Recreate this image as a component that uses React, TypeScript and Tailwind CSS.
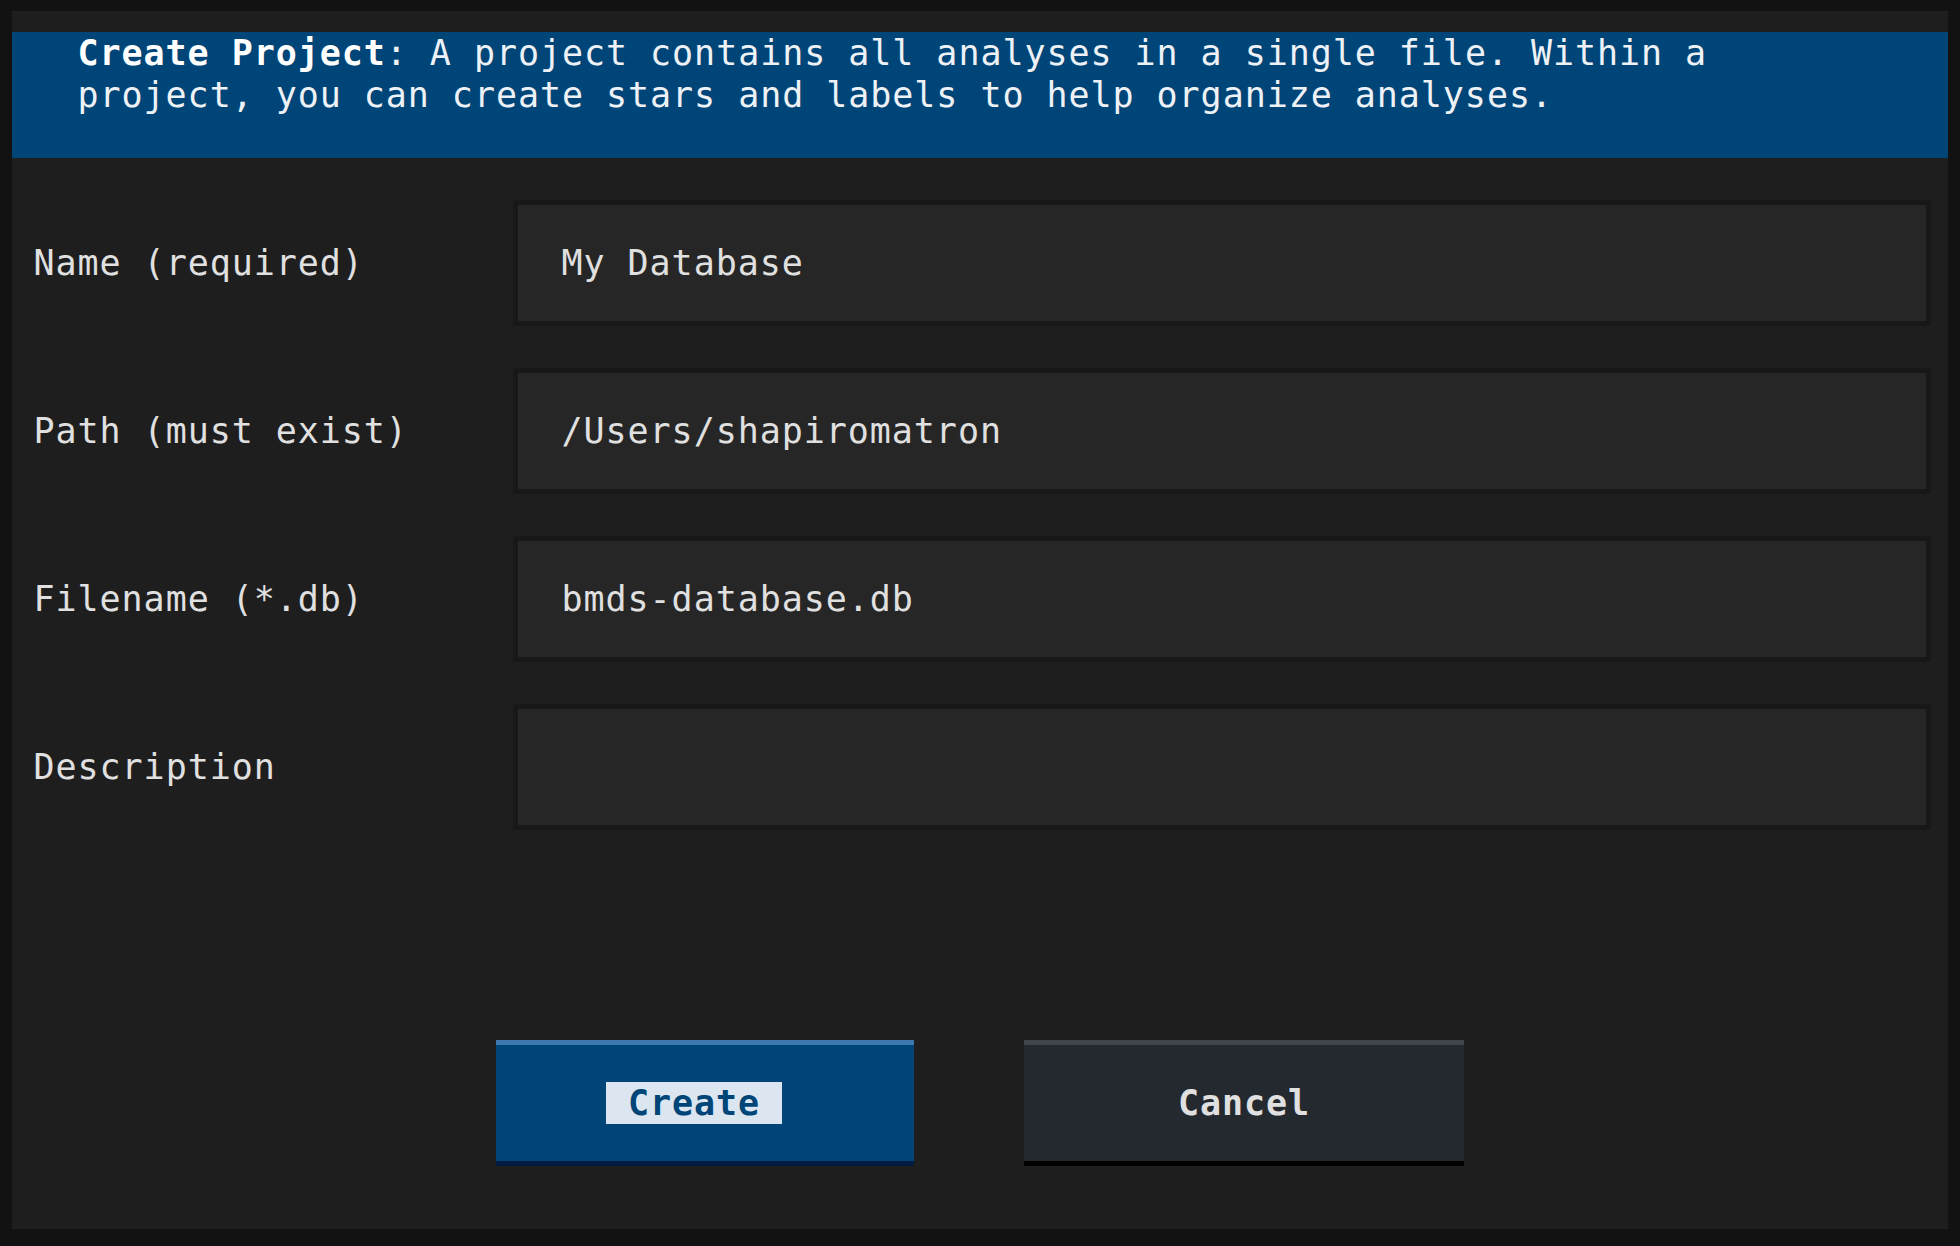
import React from "react";

const mono = { fontFamily: '"DejaVu Sans Mono", "Liberation Mono", monospace' };

function Field({ label, value }: { label: string; value: string }) {
  return (
    <div className="flex items-center">
      <div className="w-[501px] shrink-0 pl-[21.5px] text-[#e0e0e0] leading-[42px] whitespace-pre">
        {label}
      </div>
      <div className="w-[1418px] h-[126px] shrink-0 border-[5px] border-[#181818] bg-[#262626] flex items-center pl-[43.5px] text-[#e0e0e0] leading-[42px] whitespace-pre">
        {value}
      </div>
    </div>
  );
}

export default function App() {
  return (
    <div
      className="w-[1960px] h-[1246px] bg-[#121212] pt-[11px] pl-[12px] overflow-hidden text-[35px] tracking-[0.95px]"
      style={mono}
    >
      <div className="w-[1936px] h-[1218px] bg-[#1e1e1e] flex flex-col">
        <div className="mt-[21px] h-[126px] bg-[#004578] pl-[65.5px] text-[#eef2f6] leading-[42px] whitespace-pre">
          <div>
            <span className="font-bold text-white">Create Project</span>: A project contains all analyses in a single file. Within a
          </div>
          <div>project, you can create stars and labels to help organize analyses.</div>
        </div>
        <div className="mt-[42px] flex flex-col gap-[42px]">
          <Field label="Name (required)" value="My Database" />
          <Field label="Path (must exist)" value="/Users/shapiromatron" />
          <Field label="Filename (*.db)" value="bmds-database.db" />
          <Field label="Description" value="" />
        </div>
        <div className="mt-[210px] flex pl-[484px] gap-[110px]">
          <div className="w-[418px] h-[126px] bg-[#004578] border-t-[5px] border-b-[5px] border-t-[#3f77b0] border-b-[#001a40] flex items-center pl-[110px]">
            <div className="w-[176px] h-[42px] bg-[#dce6f0] text-[#004578] font-bold leading-[42px] text-center">
              Create
            </div>
          </div>
          <div className="w-[440px] h-[126px] bg-[#242930] border-t-[5px] border-b-[5px] border-t-[#40454c] border-b-[#000000] flex items-center justify-center text-[#e0e0e0] font-bold leading-[42px]">
            Cancel
          </div>
        </div>
      </div>
    </div>
  );
}
